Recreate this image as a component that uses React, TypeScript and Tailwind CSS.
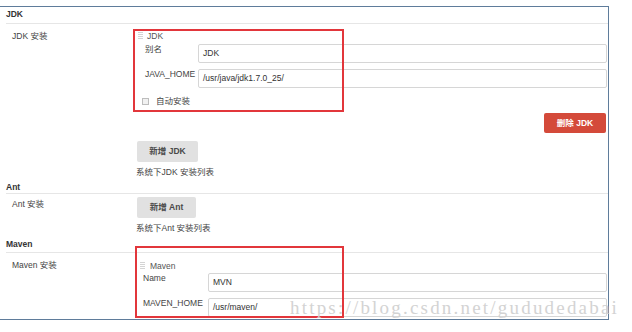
import type { ReactNode } from 'react'

function Grip() {
  return (
    <svg width="5" height="8" viewBox="0 0 5 8" className="shrink-0">
      {[0, 2, 4, 6].map((y) => (
        <rect key={y} x="0" y={y} width="5" height="1" fill="#d4d4d4" />
      ))}
    </svg>
  )
}

function SectionHeader({ title, className }: { title: string; className: string }) {
  return (
    <div className={`ml-[6px] border-b border-[#e6e6e6] font-bold text-[#333] leading-[11px] ${className}`}>
      {title}
    </div>
  )
}

function Field({ label, value, labelWidth, mt }: { label: string; value: string; labelWidth: string; mt: string }) {
  return (
    <div className={`flex ${mt}`}>
      <div className={`${labelWidth} shrink-0 leading-[11px] text-[#444]`}>{label}</div>
      <div className="mr-[1px] flex h-[19px] flex-1 items-center rounded-[2px] border border-[#d6d6d6] bg-white pl-[4px] text-[#333]">
        {value}
      </div>
    </div>
  )
}

function Row({ label, labelPt, children }: { label: string; labelPt: string; children: ReactNode }) {
  return (
    <div className="flex">
      <div className={`w-[133px] shrink-0 pl-[12px] leading-[11px] text-[#444] ${labelPt}`}>{label}</div>
      <div className="flex min-w-0 flex-1 flex-col">{children}</div>
    </div>
  )
}

function AddButton({ text, width, mt }: { text: string; width: string; mt: string }) {
  return (
    <div
      className={`ml-[4px] flex h-[21px] ${width} ${mt} items-center justify-center rounded-[2px] bg-[#e1e1e1] font-bold text-[#4a4a4a]`}
    >
      {text}
    </div>
  )
}

export default function App() {
  return (
    <div className="relative h-[332px] w-[632px] overflow-hidden bg-white font-['Liberation_Sans','Noto_Sans_CJK_SC',sans-serif] text-[8.5px]">
      <div className="mt-[6px] h-[314px] w-[609px] overflow-hidden border-y border-r border-[#5f7c9b]">
        <SectionHeader title="JDK" className="h-[17px] pt-[2px]" />

        <Row label="JDK 安装" labelPt="pt-[7px]">
          <div className="mt-[7px] flex h-[10px] items-center gap-[4px] pl-[5px] leading-[10px] text-[#555]">
            <Grip />
            <span>JDK</span>
          </div>
          <div className="pl-[12px]">
            <Field label="别名" value="JDK" labelWidth="w-[53px]" mt="mt-[3px]" />
            <Field label="JAVA_HOME" value="/usr/java/jdk1.7.0_25/" labelWidth="w-[53px]" mt="mt-[6px]" />
          </div>
          <div className="mt-[9px] flex h-[9px] items-center gap-[7px] pl-[9px] text-[#444]">
            <div className="h-[7px] w-[7px] border border-[#bdbdbd] bg-[#f1f1f1]" />
            <span>自动安装</span>
          </div>
          <div className="mr-[2px] mt-[7px] flex h-[20px] w-[62px] items-center justify-center self-end rounded-[2px] bg-[#d44a3a] font-bold text-white">
            删除 JDK
          </div>
          <AddButton text="新增 JDK" width="w-[61px]" mt="mt-[8px]" />
          <div className="mt-[5px] pl-[3px] leading-[11px] text-[#444]">系统下JDK 安装列表</div>
        </Row>

        <SectionHeader title="Ant" className="h-[16px] pt-[4px]" />

        <Row label="Ant 安装" labelPt="pt-[5px]">
          <AddButton text="新增 Ant" width="w-[59px]" mt="mt-[3px]" />
          <div className="mt-[5px] pl-[3px] leading-[11px] text-[#444]">系统下Ant 安装列表</div>
        </Row>

        <SectionHeader title="Maven" className="h-[19px] pt-[5px]" />

        <Row label="Maven 安装" labelPt="pt-[7px]">
          <div className="mt-[8px] flex h-[10px] items-center gap-[5px] pl-[7px] leading-[10px] text-[#555]">
            <Grip />
            <span>Maven</span>
          </div>
          <div className="pl-[10px]">
            <Field label="Name" value="MVN" labelWidth="w-[65px]" mt="mt-[2px]" />
            <Field label="MAVEN_HOME" value="/usr/maven/" labelWidth="w-[65px]" mt="mt-[6px]" />
          </div>
        </Row>
      </div>

      {/* annotation boxes */}
      <div className="absolute left-[133px] top-[29px] h-[83px] w-[211px] border-2 border-[#e2363b]" />
      <div className="absolute left-[135px] top-[246px] h-[72px] w-[209px] border-2 border-[#e2363b]" />

      {/* watermark */}
      <div className="pointer-events-none absolute left-[290px] top-[297px] whitespace-nowrap font-['Liberation_Serif',serif] text-[19px] leading-[22px] tracking-[2.2px] text-[#cfcfcf] opacity-90">
        https://blog.csdn.net/gududedabai
      </div>
    </div>
  )
}
